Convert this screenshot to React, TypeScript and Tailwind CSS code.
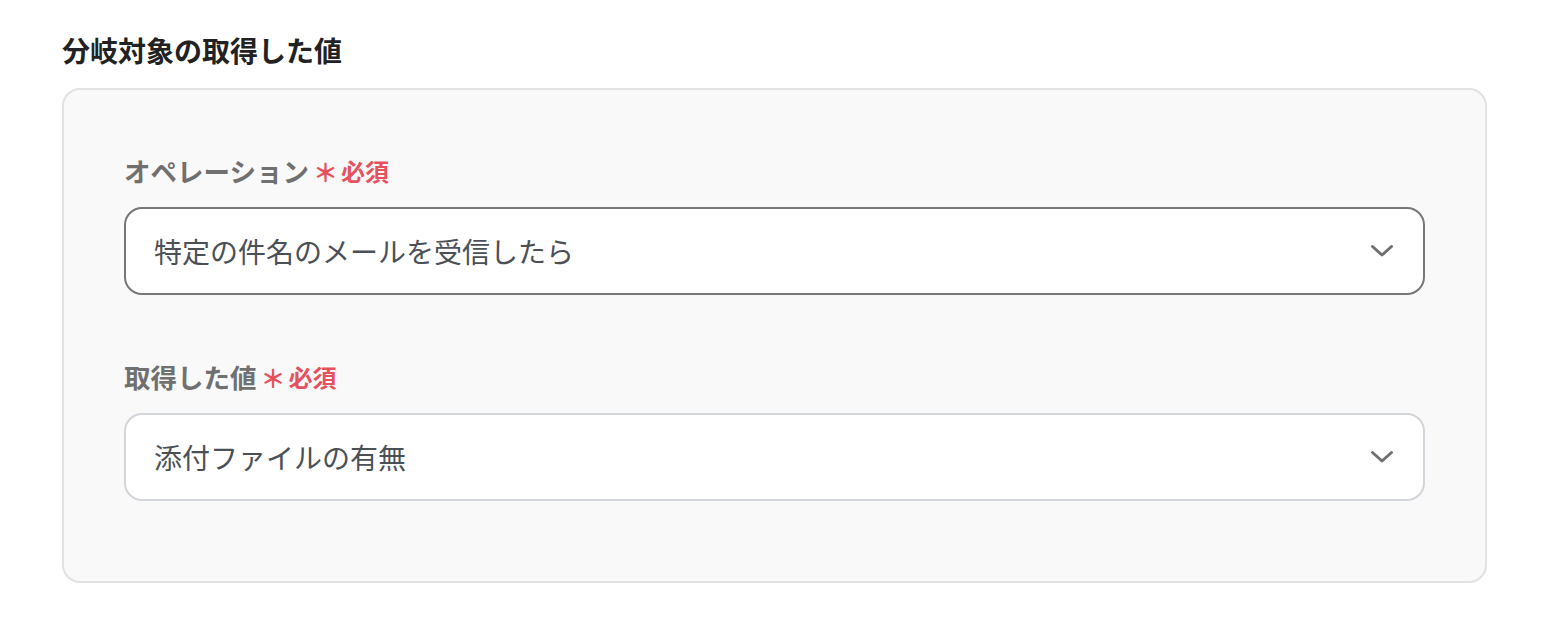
const font = { fontFamily: '"Noto Sans CJK JP", "Noto Sans", sans-serif' };

function Chevron() {
  return (
    <svg width="24" height="14" viewBox="0 0 24 14" fill="none" className="shrink-0">
      <path d="M2.5 2.5 L12 11 L21.5 2.5" stroke="#707070" strokeWidth="3" strokeLinecap="round" strokeLinejoin="round" />
    </svg>
  );
}

function Field({ label, value, active }: { label: string; value: string; active?: boolean }) {
  return (
    <div>
      <div className="flex items-center h-9 mb-[18px]">
        <span className="text-[26.5px] font-bold text-[#707070] leading-9">{label}</span>
        <span className="ml-[4px] text-[25px] font-bold text-[#e5525e] leading-9">＊</span>
        <span className="ml-[3px] text-[24px] font-bold text-[#e5525e] leading-9">必須</span>
      </div>
      <div
        className={`flex items-center justify-between h-[88px] rounded-[18px] bg-white border-2 pl-[28px] pr-[29px] ${
          active ? 'border-[#777777]' : 'border-[#d2d5d9]'
        }`}
      >
        <span className="text-[28px] text-[#4b5057] leading-10">{value}</span>
        <Chevron />
      </div>
    </div>
  );
}

export default function App() {
  return (
    <div className="bg-white w-[1552px] h-[632px] px-[62px] pt-[30px]" style={font}>
      <h2 className="text-[28px] font-bold text-[#222222] leading-10 mb-[18px]">分岐対象の取得した値</h2>
      <div className="w-[1425px] rounded-[18px] border-2 border-[#e2e2e2] bg-[#f9f9f9] px-[60px] pt-[63px] pb-[80px]">
        <Field label="オペレーション" value="特定の件名のメールを受信したら" active />
        <div className="h-[64px]" />
        <Field label="取得した値" value="添付ファイルの有無" />
      </div>
    </div>
  );
}
